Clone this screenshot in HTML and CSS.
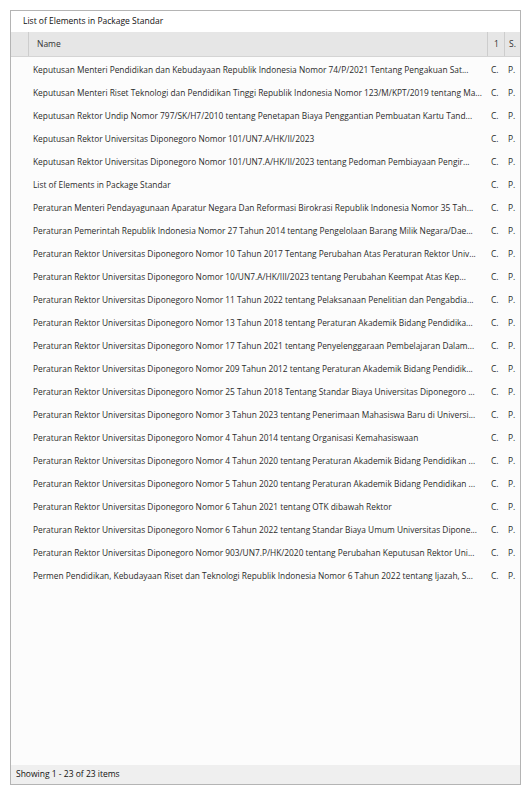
FILE: index.html
```html
<!DOCTYPE html>
<html>
<head>
<meta charset="utf-8">
<link rel="stylesheet" href="styles.css">
</head>
<body>
<div class="panel">
  <div class="title">List of Elements in Package Standar</div>
  <div class="head">
    <div class="c0"></div>
    <div class="c1">Name</div>
    <div class="c2">1</div>
    <div class="c3">S.</div>
  </div>
  <div class="body">
    <div class="row"><div class="c0"></div><div class="c1">Keputusan Menteri Pendidikan dan Kebudayaan Republik Indonesia Nomor 74/P/2021 Tentang Pengakuan Sat...</div><div class="c2">C.</div><div class="c3">P.</div></div>
    <div class="row"><div class="c0"></div><div class="c1">Keputusan Menteri Riset Teknologi dan Pendidikan Tinggi Republik Indonesia Nomor 123/M/KPT/2019 tentang Ma...</div><div class="c2">C.</div><div class="c3">P.</div></div>
    <div class="row"><div class="c0"></div><div class="c1">Keputusan Rektor Undip Nomor 797/SK/H7/2010 tentang Penetapan Biaya Penggantian Pembuatan Kartu Tand...</div><div class="c2">C.</div><div class="c3">P.</div></div>
    <div class="row"><div class="c0"></div><div class="c1">Keputusan Rektor Universitas Diponegoro Nomor 101/UN7.A/HK/II/2023</div><div class="c2">C.</div><div class="c3">P.</div></div>
    <div class="row"><div class="c0"></div><div class="c1">Keputusan Rektor Universitas Diponegoro Nomor 101/UN7.A/HK/II/2023 tentang Pedoman Pembiayaan Pengir...</div><div class="c2">C.</div><div class="c3">P.</div></div>
    <div class="row"><div class="c0"></div><div class="c1">List of Elements in Package Standar</div><div class="c2">C.</div><div class="c3">P.</div></div>
    <div class="row"><div class="c0"></div><div class="c1">Peraturan Menteri Pendayagunaan Aparatur Negara Dan Reformasi Birokrasi Republik Indonesia Nomor 35 Tah...</div><div class="c2">C.</div><div class="c3">P.</div></div>
    <div class="row"><div class="c0"></div><div class="c1">Peraturan Pemerintah Republik Indonesia Nomor 27 Tahun 2014 tentang Pengelolaan Barang Milik Negara/Dae...</div><div class="c2">C.</div><div class="c3">P.</div></div>
    <div class="row"><div class="c0"></div><div class="c1">Peraturan Rektor Universitas Diponegoro Nomor 10 Tahun 2017 Tentang Perubahan Atas Peraturan Rektor Univ...</div><div class="c2">C.</div><div class="c3">P.</div></div>
    <div class="row"><div class="c0"></div><div class="c1">Peraturan Rektor Universitas Diponegoro Nomor 10/UN7.A/HK/III/2023 tentang Perubahan Keempat Atas Kep...</div><div class="c2">C.</div><div class="c3">P.</div></div>
    <div class="row"><div class="c0"></div><div class="c1">Peraturan Rektor Universitas Diponegoro Nomor 11 Tahun 2022 tentang Pelaksanaan Penelitian dan Pengabdia...</div><div class="c2">C.</div><div class="c3">P.</div></div>
    <div class="row"><div class="c0"></div><div class="c1">Peraturan Rektor Universitas Diponegoro Nomor 13 Tahun 2018 tentang Peraturan Akademik Bidang Pendidika...</div><div class="c2">C.</div><div class="c3">P.</div></div>
    <div class="row"><div class="c0"></div><div class="c1">Peraturan Rektor Universitas Diponegoro Nomor 17 Tahun 2021 tentang Penyelenggaraan Pembelajaran Dalam...</div><div class="c2">C.</div><div class="c3">P.</div></div>
    <div class="row"><div class="c0"></div><div class="c1">Peraturan Rektor Universitas Diponegoro Nomor 209 Tahun 2012 tentang Peraturan Akademik Bidang Pendidik...</div><div class="c2">C.</div><div class="c3">P.</div></div>
    <div class="row"><div class="c0"></div><div class="c1">Peraturan Rektor Universitas Diponegoro Nomor 25 Tahun 2018 Tentang Standar Biaya Universitas Diponegoro ...</div><div class="c2">C.</div><div class="c3">P.</div></div>
    <div class="row"><div class="c0"></div><div class="c1">Peraturan Rektor Universitas Diponegoro Nomor 3 Tahun 2023 tentang Penerimaan Mahasiswa Baru di Universi...</div><div class="c2">C.</div><div class="c3">P.</div></div>
    <div class="row"><div class="c0"></div><div class="c1">Peraturan Rektor Universitas Diponegoro Nomor 4 Tahun 2014 tentang Organisasi Kemahasiswaan</div><div class="c2">C.</div><div class="c3">P.</div></div>
    <div class="row"><div class="c0"></div><div class="c1">Peraturan Rektor Universitas Diponegoro Nomor 4 Tahun 2020 tentang Peraturan Akademik Bidang Pendidikan ...</div><div class="c2">C.</div><div class="c3">P.</div></div>
    <div class="row"><div class="c0"></div><div class="c1">Peraturan Rektor Universitas Diponegoro Nomor 5 Tahun 2020 tentang Peraturan Akademik Bidang Pendidikan ...</div><div class="c2">C.</div><div class="c3">P.</div></div>
    <div class="row"><div class="c0"></div><div class="c1">Peraturan Rektor Universitas Diponegoro Nomor 6 Tahun 2021 tentang OTK dibawah Rektor</div><div class="c2">C.</div><div class="c3">P.</div></div>
    <div class="row"><div class="c0"></div><div class="c1">Peraturan Rektor Universitas Diponegoro Nomor 6 Tahun 2022 tentang Standar Biaya Umum Universitas Dipone...</div><div class="c2">C.</div><div class="c3">P.</div></div>
    <div class="row"><div class="c0"></div><div class="c1">Peraturan Rektor Universitas Diponegoro Nomor 903/UN7.P/HK/2020 tentang Perubahan Keputusan Rektor Uni...</div><div class="c2">C.</div><div class="c3">P.</div></div>
    <div class="row"><div class="c0"></div><div class="c1">Permen Pendidikan, Kebudayaan Riset dan Teknologi Republik Indonesia Nomor 6 Tahun 2022 tentang Ijazah, S...</div><div class="c2">C.</div><div class="c3">P.</div></div>
  </div>
  <div class="foot">Showing 1 - 23 of 23 items</div>
</div>
</body>
</html>
```

FILE: styles.css
```css
html, body {
  margin: 0;
  padding: 0;
  background: #ffffff;
}
body {
  padding: 10px 10px 10px 10px;
  font-family: "Open Sans", "DejaVu Sans", sans-serif;
  font-size: 8.5px;
  color: #2b2b2b;
}
.panel {
  width: 511px;
  height: 775px;
  box-sizing: border-box;
  border: 1px solid #b4b4b4;
  display: flex;
  flex-direction: column;
  background: #fcfcfc;
}
.title {
  height: 21px;
  line-height: 20px;
  padding-left: 12px;
  background: #ffffff;
  color: #111;
}
.head {
  display: grid;
  grid-template-columns: 17px 459px 17px 16px;
  height: 25px;
  background: #e6e6e6;
  border-bottom: 1px solid #d4d4d4;
  box-sizing: border-box;
}
.head > div {
  line-height: 24px;
  border-left: 1px solid #cdcdcd;
  white-space: nowrap;
  overflow: hidden;
  color: #333;
}
.head > .c0 { border-left: none; }
.head .c1 { padding-left: 8px; }
.head .c2 { padding-left: 6px; }
.head .c3 { padding-left: 4px; }
.body {
  flex: 1;
  padding-top: 1px;
}
.row {
  display: grid;
  grid-template-columns: 17px 459px 17px 16px;
  height: 23px;
  line-height: 23px;
}
.row > div {
  white-space: nowrap;
  overflow: hidden;
  min-width: 0;
}
.row .c1 { padding-left: 5px; font-size: 8.35px; }
.row .c2 { padding-left: 4px; }
.row .c3 { padding-left: 4px; }
.foot {
  height: 19px;
  line-height: 18px;
  padding-left: 5px;
  background: #efefef;
  color: #111;
}
```
